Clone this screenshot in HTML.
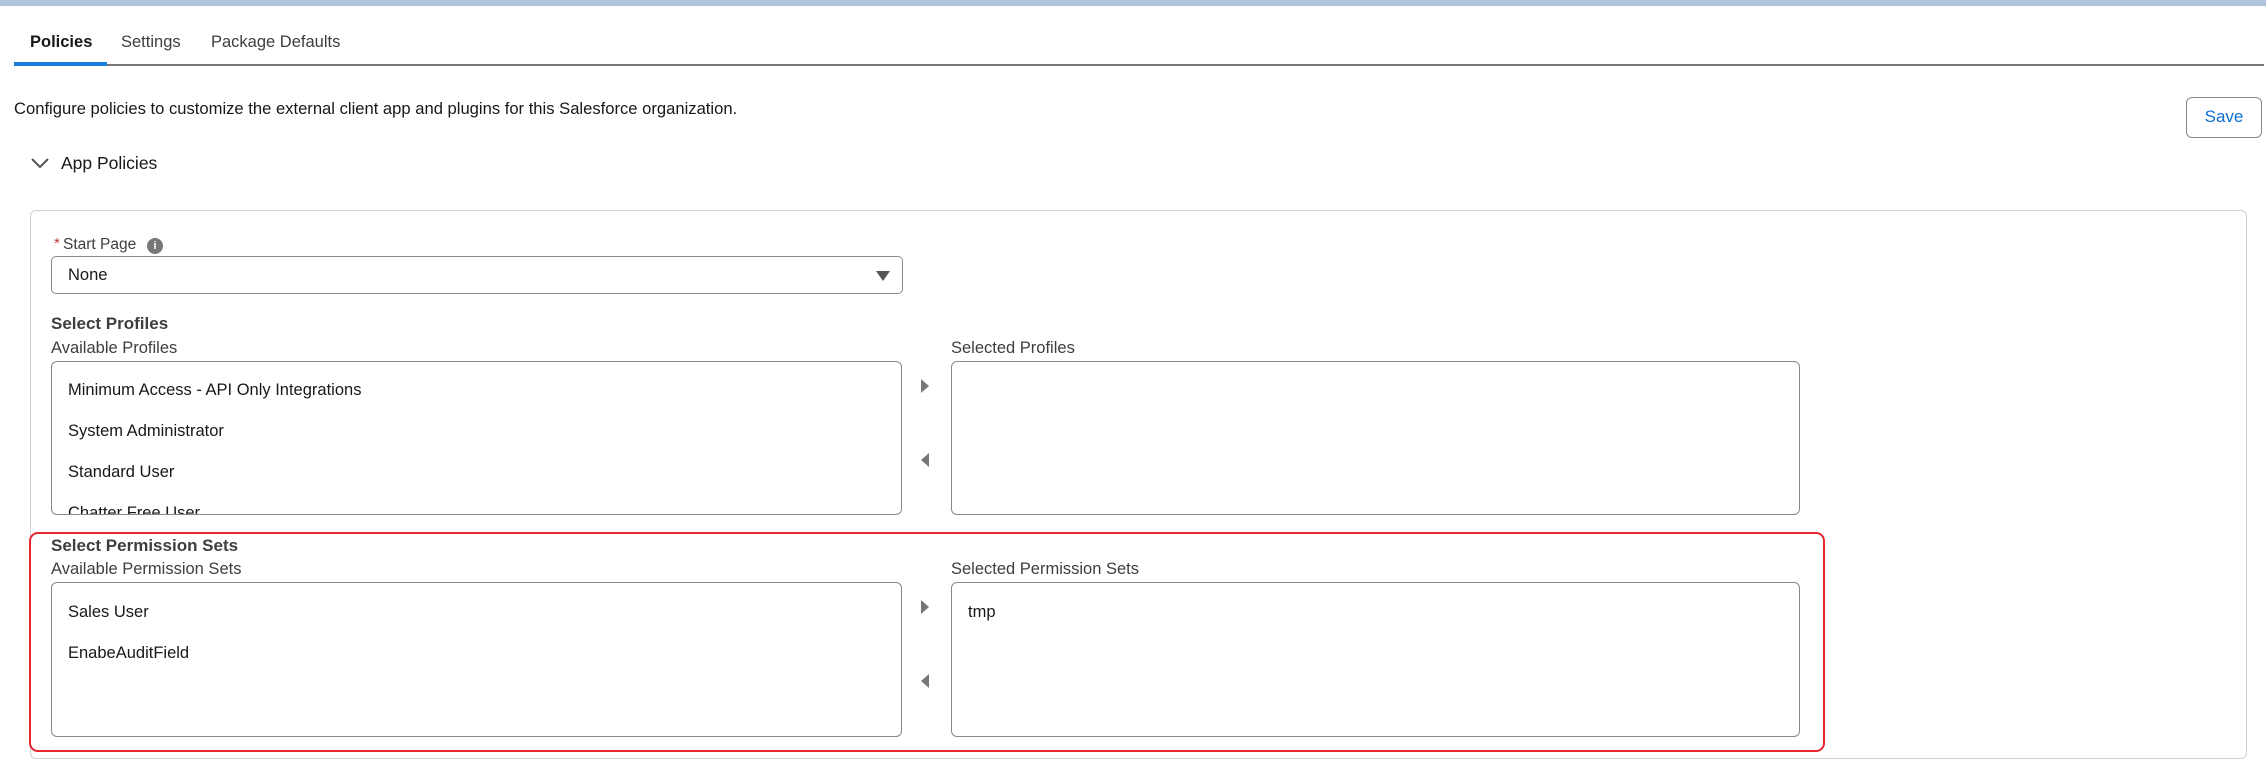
<!DOCTYPE html>
<html><head><meta charset="utf-8"><style>
*{box-sizing:border-box;margin:0;padding:0}
body{width:2266px;height:778px;background:#fff;font-family:"Liberation Sans",Arial,sans-serif;color:#181818;position:relative;overflow:hidden}
.a{position:absolute;white-space:nowrap}
.box{position:absolute;border:1.5px solid #888;border-radius:6px;background:#fff;overflow:hidden}
.it{position:absolute;left:16px;font-size:16.5px;color:#181818}
.lbl{font-size:16.5px;color:#3e3e3c}
.h{font-size:17px;font-weight:bold;color:#3e3e3c}
.tri{position:absolute;width:0;height:0;border-top:7px solid transparent;border-bottom:7px solid transparent}
</style></head><body>
<div class="a" style="left:0;top:0;width:2266px;height:6px;background:#b0c4de"></div>
<div class="a" style="left:30px;top:33px;font-size:16.5px;font-weight:bold">Policies</div>
<div class="a" style="left:121px;top:33px;font-size:16.5px;color:#3e3e3c">Settings</div>
<div class="a" style="left:211px;top:33px;font-size:16.5px;color:#3e3e3c">Package Defaults</div>
<div class="a" style="left:14px;top:64px;width:2250px;height:1.5px;background:#777"></div>
<div class="a" style="left:14px;top:62px;width:93px;height:4px;background:#1b7de0"></div>
<div class="a" style="left:14px;top:99px;font-size:16.6px">Configure policies to customize the external client app and plugins for this Salesforce organization.</div>
<div class="a" style="left:2186px;top:97px;width:76px;height:41px;border:1.5px solid #888;border-radius:6px;color:#0b6fd4;font-size:17px;text-align:center;line-height:38px">Save</div>
<svg class="a" style="left:31px;top:157px" width="18" height="12" viewBox="0 0 18 12"><path d="M1 2 L9 10 L17 2" fill="none" stroke="#555" stroke-width="2"/></svg>
<div class="a" style="left:61px;top:153px;font-size:17.5px">App Policies</div>
<div class="a" style="left:30px;top:210px;width:2217px;height:549px;border:1.5px solid #d0d0d0;border-radius:6px"></div>
<div class="a" style="left:54px;top:235px;font-size:15px;color:#c23934">*</div>
<div class="a lbl" style="left:63px;top:236px;font-size:15.5px">Start Page</div>
<div class="a" style="left:147px;top:238px;width:16px;height:16px;border-radius:50%;background:#777;color:#fff;font-size:11px;font-weight:bold;text-align:center;line-height:16px">i</div>
<div class="box" style="left:51px;top:256px;width:852px;height:38px;border-radius:5px">
<div class="it" style="top:9px">None</div>
<div class="tri" style="right:12px;top:14px;border:none;border-left:7px solid transparent;border-right:7px solid transparent;border-top:10px solid #555"></div>
</div>
<div class="a h" style="left:51px;top:314px">Select Profiles</div>
<div class="a lbl" style="left:51px;top:339px">Available Profiles</div>
<div class="a lbl" style="left:951px;top:339px">Selected Profiles</div>
<div class="box" style="left:51px;top:361px;width:851px;height:154px">
<div class="it" style="top:19px">Minimum Access - API Only Integrations</div>
<div class="it" style="top:60px">System Administrator</div>
<div class="it" style="top:101px">Standard User</div>
<div class="it" style="top:142px">Chatter Free User</div>
</div>
<div class="tri" style="left:921px;top:379px;border-left:8px solid #777"></div>
<div class="tri" style="left:921px;top:453px;border-right:8px solid #777"></div>
<div class="box" style="left:951px;top:361px;width:849px;height:154px"></div>
<div class="a" style="left:29px;top:532px;width:1796px;height:220px;border:2.5px solid #e8282e;border-radius:9px"></div>
<div class="a h" style="left:51px;top:536px">Select Permission Sets</div>
<div class="a lbl" style="left:51px;top:560px">Available Permission Sets</div>
<div class="a lbl" style="left:951px;top:560px">Selected Permission Sets</div>
<div class="box" style="left:51px;top:582px;width:851px;height:155px">
<div class="it" style="top:20px">Sales User</div>
<div class="it" style="top:61px">EnabeAuditField</div>
</div>
<div class="tri" style="left:921px;top:600px;border-left:8px solid #777"></div>
<div class="tri" style="left:921px;top:674px;border-right:8px solid #777"></div>
<div class="box" style="left:951px;top:582px;width:849px;height:155px">
<div class="it" style="top:20px">tmp</div>
</div>
</body></html>
